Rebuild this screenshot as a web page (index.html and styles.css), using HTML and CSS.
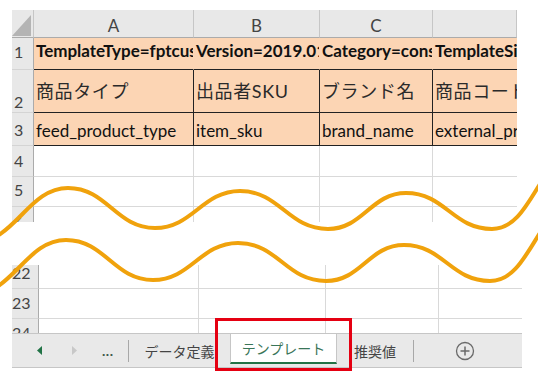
FILE: index.html
```html
<!DOCTYPE html>
<html lang="ja">
<head>
  <meta charset="UTF-8">
  <title>テンプレート</title>
  <link rel="stylesheet" href="styles.css">
</head>
<body>
  <div class="sheet sheet-top">
    <div class="corner"><span class="corner-mark"></span></div>
    <div class="col-head">A</div>
    <div class="col-head">B</div>
    <div class="col-head">C</div>
    <div class="col-head last"></div>

    <div class="row-head r1">1</div>
    <div class="cell peach title">TemplateType=fptcustom</div>
    <div class="cell peach title">Version=2019.0111</div>
    <div class="cell peach title">Category=consumer_electronics</div>
    <div class="cell peach title last">TemplateSignature=Q09OU1VNRVI=</div>

    <div class="row-head r2">2</div>
    <div class="cell peach label">商品タイプ</div>
    <div class="cell peach label">出品者SKU</div>
    <div class="cell peach label">ブランド名</div>
    <div class="cell peach label last">商品コード(JANコード等)</div>

    <div class="row-head">3</div>
    <div class="cell peach field">feed_product_type</div>
    <div class="cell peach field">item_sku</div>
    <div class="cell peach field">brand_name</div>
    <div class="cell peach field last">external_product_id</div>

    <div class="row-head">4</div>
    <div class="cell"></div>
    <div class="cell"></div>
    <div class="cell"></div>
    <div class="cell last"></div>

    <div class="row-head r5">5</div>
    <div class="cell"></div>
    <div class="cell"></div>
    <div class="cell"></div>
    <div class="cell last"></div>

    <div class="row-head cut">6</div>
    <div class="cell cut"></div>
    <div class="cell cut"></div>
    <div class="cell cut"></div>
    <div class="cell cut last"></div>
  </div>

  <div class="sheet sheet-bottom">
    <div class="row-head wide">22</div>
    <div class="cell"></div>
    <div class="cell"></div>
    <div class="cell"></div>
    <div class="cell last"></div>

    <div class="row-head wide">23</div>
    <div class="cell"></div>
    <div class="cell"></div>
    <div class="cell"></div>
    <div class="cell last"></div>

    <div class="row-head wide cut low">24</div>
    <div class="cell cut"></div>
    <div class="cell cut"></div>
    <div class="cell cut"></div>
    <div class="cell cut last"></div>
  </div>

  <div class="tabs">
    <div class="nav">
      <span class="nav-prev"></span>
      <span class="nav-next"></span>
      <span class="more">...</span>
    </div>
    <span class="sep"></span>
    <div class="tab tab-def">データ定義</div>
    <div class="tab active">テンプレート</div>
    <div class="tab tab-rec">推奨値</div>
    <span class="sep"></span>
    <div class="add">
      <svg width="20" height="20" viewBox="0 0 20 20">
        <circle cx="10" cy="10" r="8.5" fill="none" stroke="#6a6a6a" stroke-width="1.3"/>
        <path d="M10 5.5v9M5.5 10h9" stroke="#6a6a6a" stroke-width="1.5"/>
      </svg>
    </div>
    <div class="highlight"></div>
  </div>

  <svg class="waves" width="538" height="382" viewBox="0 0 538 382">
    <path class="wave" d="M -25 242 C 15 242, 28 188, 68 188 C 107 188, 116 228, 155 228 C 193 228, 202 191, 240 191 C 280 191, 288 229, 328 229 C 363 229, 371 193, 406 193 C 445 193, 453 229, 492 229 C 525 229, 535 180, 565 150"/>
    <path class="wave" transform="translate(-2 52)" d="M -25 242 C 15 242, 28 188, 68 188 C 107 188, 116 228, 155 228 C 193 228, 202 191, 240 191 C 280 191, 288 229, 328 229 C 363 229, 371 193, 406 193 C 445 193, 453 229, 492 229 C 525 229, 535 180, 565 150"/>
  </svg>
</body>
</html>
```

FILE: styles.css
```css
* {
  box-sizing: border-box;
}

body {
  margin: 0;
  width: 538px;
  height: 382px;
  overflow: hidden;
  position: relative;
  background: #fff;
  color: #111;
  font-family: Lato, "Noto Sans CJK JP", sans-serif;
}

/* sheet fragments */
.sheet {
  display: grid;
  margin-left: 12px;
}

.sheet-top {
  margin-top: 10px;
  grid-template-columns: 22px 160px 126px 113px 84px;
  grid-template-rows: 28px 32px 43px 33px 31px 30px 15px;
}

.sheet-bottom {
  margin-top: 43px;
  grid-template-columns: 27px 160px 127px 113px 83px;
  grid-template-rows: 24px 30px 14px;
}

.sheet > div {
  display: flex;
  align-items: flex-end;
  overflow: hidden;
  white-space: nowrap;
}

.corner {
  background: #e8e8e8;
  border-right: 1px solid #c6c6c6;
  border-bottom: 1px solid #ababab;
  justify-content: flex-end;
}

.corner-mark {
  width: 19px;
  height: 21px;
  margin: 0 2px 1px 0;
  background: #b4b4b4;
  clip-path: polygon(100% 0, 100% 100%, 0 100%);
}

.sheet > .col-head {
  align-items: center;
  justify-content: center;
  padding-top: 3px;
  background: #e8e8e8;
  border-right: 1px solid #c6c6c6;
  border-bottom: 1px solid #ababab;
  color: #444;
  font-size: 17px;
}

.row-head {
  background: #e8e8e8;
  border-right: 1px solid #ababab;
  border-bottom: 1px solid #d4d4d4;
  padding: 0 0 7px 2px;
  color: #444;
  font-size: 16px;
  line-height: 16px;
}

.row-head.wide {
  padding-left: 0;
}

.row-head.r1 {
  padding-bottom: 9px;
}

.row-head.r2 {
  padding-bottom: 2px;
}

.row-head.r5 {
  padding-bottom: 8px;
}

.cell {
  border-right: 1px solid #d9d9d9;
  border-bottom: 1px solid #d9d9d9;
  padding: 0 2px 6px;
  font-size: 17px;
  line-height: 17px;
}

.sheet > .cut {
  align-items: flex-start;
  border-bottom: 0;
  padding-top: 8px;
  padding-bottom: 0;
}

.sheet > .cut.low {
  padding-top: 6px;
}

.last {
  border-right: 0;
}

.peach {
  background: #fcd5b4;
}

.cell.title {
  font-weight: 700;
  border-right-color: #fcd5b4;
  border-bottom-color: #222;
  padding-bottom: 10px;
}

.cell.label {
  border-right-color: #222;
  border-bottom-color: #222;
  color: #2a2a2a;
  font-size: 18px;
  line-height: 18px;
  letter-spacing: 0.6px;
  padding-bottom: 12px;
}

.cell.field {
  border-right-color: #222;
  border-bottom-color: #222;
}

/* sheet tabs */
.tabs {
  position: relative;
  display: flex;
  align-items: center;
  margin-left: 12px;
  width: 510px;
  height: 35px;
  background: #e9e9e9;
  border-top: 1px solid #c6c6c6;
  border-bottom: 1px solid #c6c6c6;
  font-family: "Noto Sans CJK JP", sans-serif;
  font-size: 14px;
  color: #444;
}

.nav {
  display: flex;
  align-items: center;
  width: 116px;
}

.nav-prev,
.nav-next {
  width: 5px;
  height: 9px;
}

.nav-prev {
  margin-left: 25px;
  background: #217346;
  clip-path: polygon(100% 0, 100% 100%, 0 50%);
}

.nav-next {
  margin-left: 30px;
  background: #c8c8c8;
  clip-path: polygon(0 0, 100% 50%, 0 100%);
}

.more {
  margin-left: 25px;
  color: #3d5a4a;
  font-family: Lato, sans-serif;
  font-weight: 700;
  font-size: 14px;
  letter-spacing: 0.5px;
}

.sep {
  width: 1px;
  height: 22px;
  background: #a8a8a8;
}

.tab {
  display: flex;
  justify-content: center;
  white-space: nowrap;
}

.tab-def {
  width: 101px;
}

.tab.active {
  align-self: flex-start;
  width: 107px;
  height: 30px;
  align-items: center;
  background: #fff;
  border-left: 1px solid #c6c6c6;
  border-right: 1px solid #c6c6c6;
  border-bottom: 2px solid #217346;
  color: #3a7558;
}

.tab-rec {
  width: 76px;
}

.add {
  display: flex;
  justify-content: center;
  flex: 1;
  padding-right: 7px;
}

.add svg {
  display: block;
}

.highlight {
  position: absolute;
  left: 203px;
  top: -16px;
  width: 137px;
  height: 53px;
  border: 3px solid #e50012;
}

/* break marks */
.waves {
  position: absolute;
  left: 0;
  top: 0;
  pointer-events: none;
}

.wave {
  fill: none;
  stroke: #f0a20c;
  stroke-width: 4;
  stroke-linecap: round;
}
```
